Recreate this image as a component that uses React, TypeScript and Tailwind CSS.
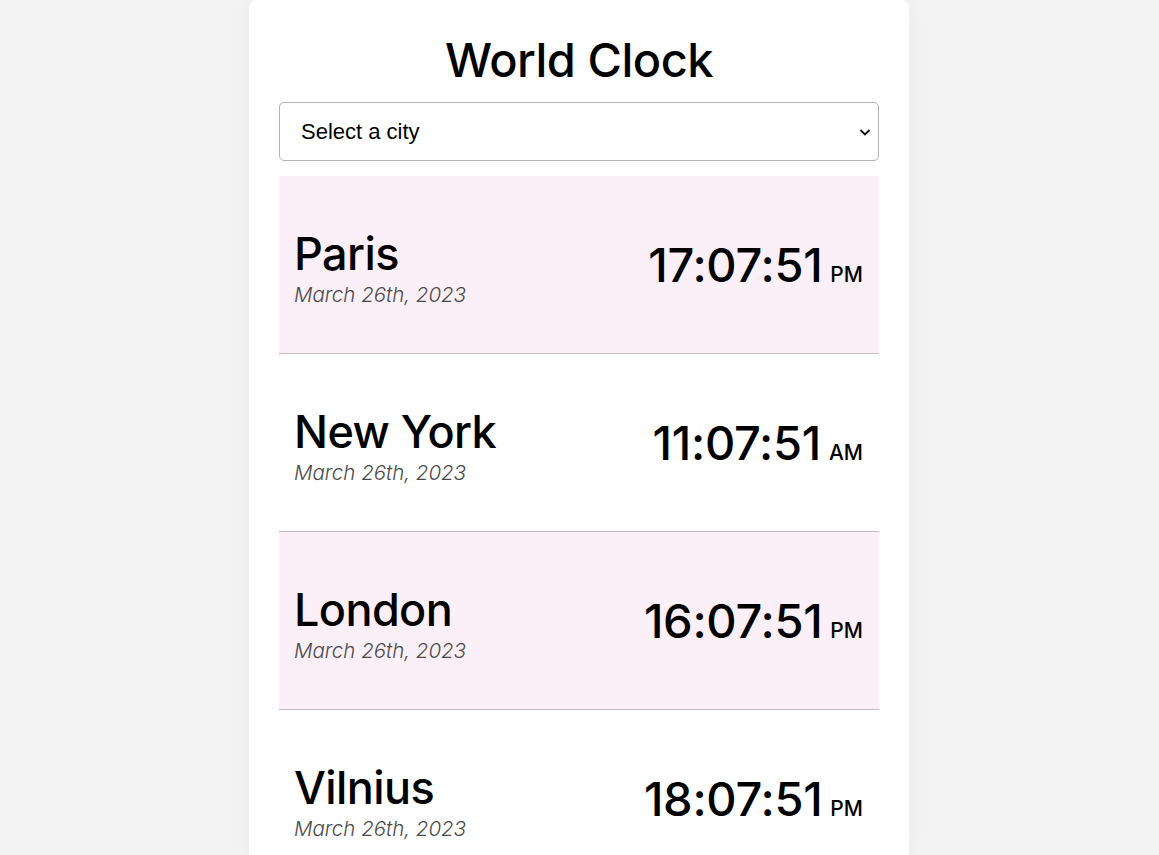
import React from "react";

const cities = [
  { name: "Paris", time: "17:07:51", ampm: "PM", pink: true },
  { name: "New York", time: "11:07:51", ampm: "AM", pink: false },
  { name: "London", time: "16:07:51", ampm: "PM", pink: true },
  { name: "Vilnius", time: "18:07:51", ampm: "PM", pink: false },
];

export default function App() {
  return (
    <div className="min-h-screen bg-[#f3f3f3] h-[855px] overflow-hidden">
      <div className="ml-[249px] w-[660px] h-full bg-white rounded-t-[8px] px-[30px] pt-[30px] shadow-[0_0_20px_rgba(0,0,0,0.04)]" style={{ fontFamily: "Inter, 'Open Sans', sans-serif" }}>
        <h1 className="text-center text-[47px] leading-[60px] font-medium text-black tracking-[-0.5px] mb-[12px]">World Clock</h1>
        <div className="relative h-[59px] border border-[#b4b4b4] rounded-[5px] flex items-center px-[21px] mb-[15px]">
          <span className="text-[22px] text-black" style={{ fontFamily: "'Liberation Sans', Arial, sans-serif" }}>Select a city</span>
          <svg className="absolute right-[6px] top-1/2 -translate-y-1/2" width="14" height="14" viewBox="0 0 14 14">
            <path d="M2.5 5 L7 9.5 L11.5 5" fill="none" stroke="#111" strokeWidth="1.8" />
          </svg>
        </div>
        {cities.map((c) => (
          <div
            key={c.name}
            className={`h-[178px] border-b border-[#c2babe] flex items-center justify-between pl-[15px] pr-[16px] ${c.pink ? "bg-[#fcf0f8]" : "bg-white"}`}
          >
            <div className="flex flex-col mt-[8px]">
              <div className="text-[45px] leading-[50px] font-medium text-black tracking-[-0.6px]">{c.name}</div>
              <div className="text-[20.5px] leading-[28px] mt-[2px] italic text-[#4a4a4a] font-light">March 26th, 2023</div>
            </div>
            <div className="flex items-baseline mt-[0px]">
              <span className="text-[47px] leading-[52px] font-medium text-black tracking-[-0.3px]">{c.time}</span>
              <span className="text-[21px] font-medium text-black ml-[8px]">{c.ampm}</span>
            </div>
          </div>
        ))}
      </div>
    </div>
  );
}
